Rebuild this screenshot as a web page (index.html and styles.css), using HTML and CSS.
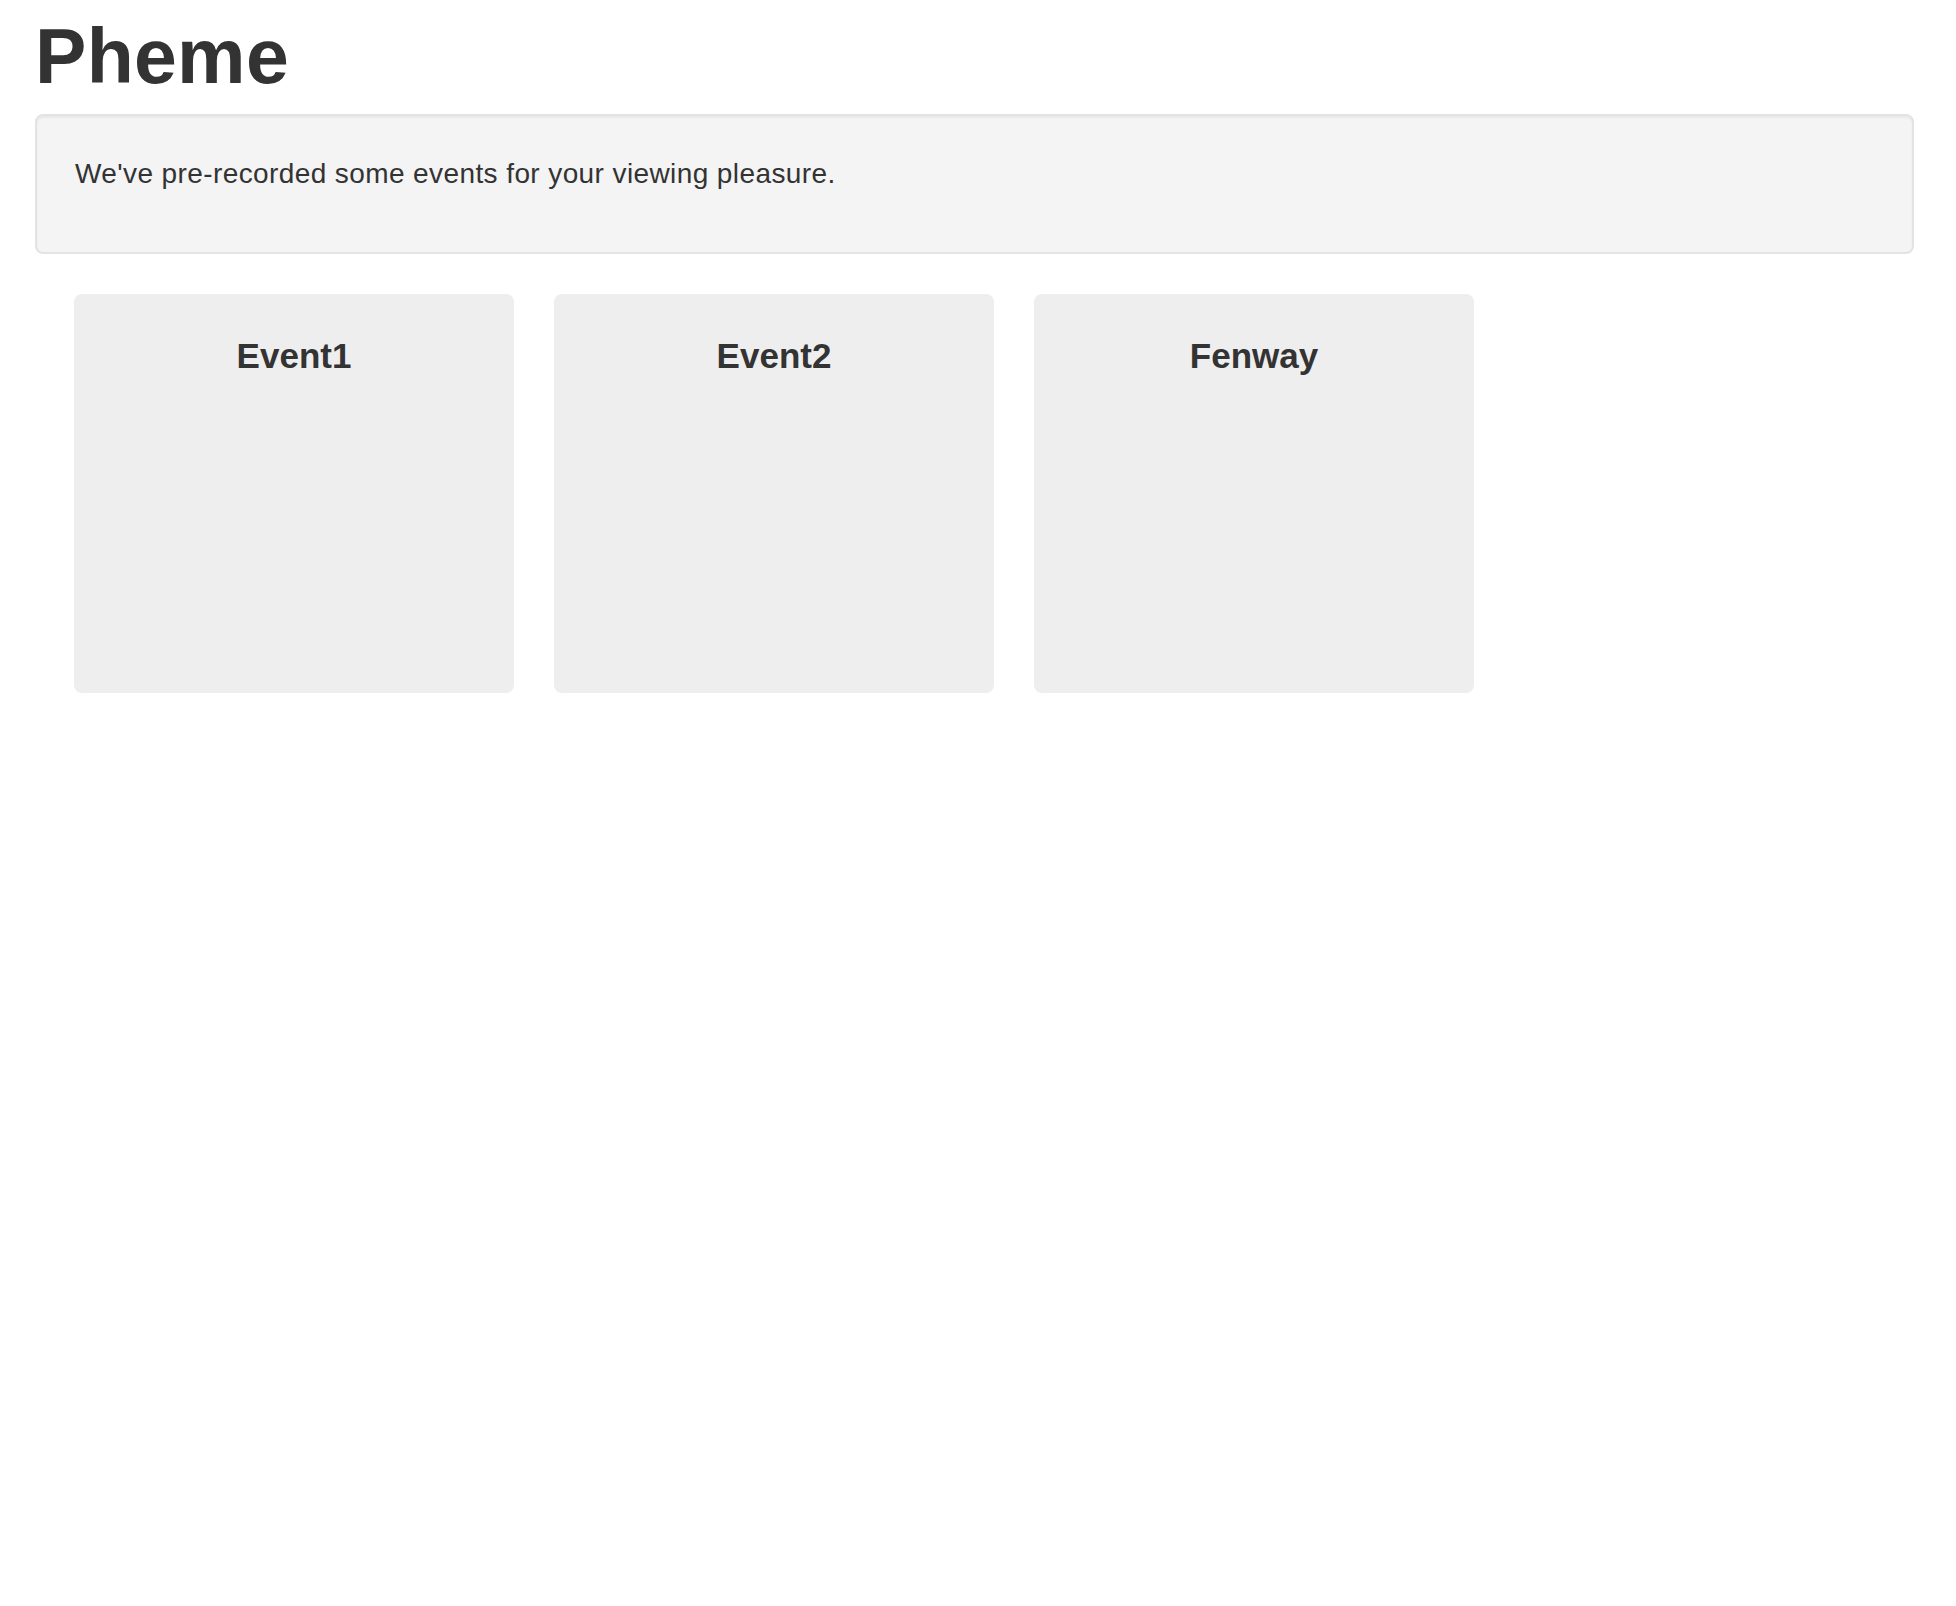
FILE: index.html
```html
<!DOCTYPE html>
<html>
<head>
<meta charset="utf-8">
<title>Pheme</title>
<link rel="stylesheet" href="styles.css">
</head>
<body>
<div class="container">
  <h1 class="title">Pheme</h1>
  <div class="well">
    <p>We've pre-recorded some events for your viewing pleasure.</p>
  </div>
  <ul class="thumbnails">
    <li class="thumb"><h4>Event1</h4></li>
    <li class="thumb"><h4>Event2</h4></li>
    <li class="thumb"><h4>Fenway</h4></li>
  </ul>
</div>
</body>
</html>
```
FILE: styles.css
```css
html, body {
  margin: 0;
  padding: 0;
  background: #fff;
}
body {
  font-family: "Liberation Sans", Arial, Helvetica, sans-serif;
  color: #333;
}
.container {
  padding: 16px 0 0 35px;
  width: 1879px;
}
.title {
  margin: 0 0 18px;
  font-size: 77px;
  line-height: 80px;
  font-weight: bold;
  color: #333;
  letter-spacing: 0.3px;
}
.well {
  background: #f4f4f4;
  border: 2px solid #e3e3e3;
  border-radius: 8px;
  padding: 38px;
  box-shadow: inset 0 2px 2px rgba(0,0,0,0.05);
  margin-bottom: 40px;
}
.well p {
  margin: 0 0 20px;
  font-size: 28px;
  line-height: 40px;
  letter-spacing: 0.4px;
}
.thumbnails {
  list-style: none;
  margin: 0;
  padding: 0 0 0 39px;
  display: flex;
  gap: 40px;
}
.thumb {
  width: 440px;
  height: 399px;
  background: #eee;
  border-radius: 8px;
  box-sizing: border-box;
  padding-top: 42px;
  text-align: center;
}
.thumb h4 {
  margin: 0;
  font-size: 35px;
  line-height: 40px;
  font-weight: bold;
  color: #333;
}
```
